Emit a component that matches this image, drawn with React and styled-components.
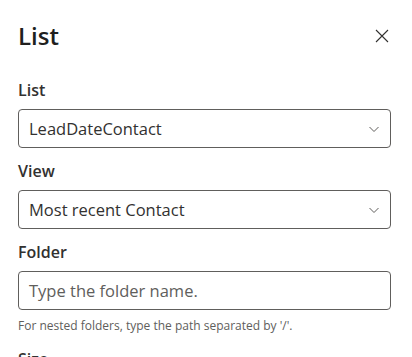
import React from 'react';
import styled, { createGlobalStyle } from 'styled-components';

const GlobalStyle = createGlobalStyle`
    html, body {
        margin: 0;
        padding: 0;
        background: #fff;
    }
    body {
        font-family: "Open Sans", "Noto Sans", sans-serif;
        color: #323130;
    }
`;

const Panel = styled.div`
    width: 412px;
    height: 357px;
    overflow: hidden;
    box-sizing: border-box;
    padding: 19px 21px 0 18px;
    background: #fff;
`;

const Header = styled.div`
    display: flex;
    justify-content: space-between;
    align-items: center;
    height: 34px;
    margin-bottom: 26px;

    h1 {
        margin: 0;
        font-size: 24px;
        font-weight: 600;
        line-height: 34px;
        color: #201f1e;
    }
`;

const CloseButton = styled.button`
    width: 24px;
    height: 24px;
    margin-right: -3px;
    padding: 0;
    border: none;
    background: transparent;
    display: flex;
    align-items: center;
    justify-content: center;
    color: #323130;
`;

const Field = styled.div`
    display: flex;
    flex-direction: column;
    margin-bottom: ${(p) => p.$gap ?? 12}px;
`;

const Label = styled.label`
    font-size: 16px;
    font-weight: 600;
    line-height: 22px;
    color: #323130;
    margin-bottom: 8px;
`;

const Box = styled.div`
    height: 39px;
    box-sizing: border-box;
    border: 1px solid #605e5c;
    border-radius: 4px;
    display: flex;
    align-items: center;
    justify-content: space-between;
    padding: 0 10px 0 10px;
    font-size: 16.5px;
    color: ${(p) => (p.$placeholder ? '#605e5c' : '#323130')};
`;

const Help = styled.div`
    font-size: 12px;
    line-height: 16px;
    color: #605e5c;
    margin-top: 8px;
`;

const Chevron = () => (
    <svg width="12" height="12" viewBox="0 0 12 12" fill="none">
        <path d="M1.5 4 L6 8.5 L10.5 4" stroke="#605e5c" strokeWidth="1" />
    </svg>
);

const App = () => {
    return (
        <>
            <GlobalStyle />
            <Panel>
                <Header>
                    <h1>List</h1>
                    <CloseButton aria-label="Close">
                        <svg width="14" height="14" viewBox="0 0 14 14" fill="none">
                            <path d="M1 1 L13 13 M13 1 L1 13" stroke="#323130" strokeWidth="1.1" />
                        </svg>
                    </CloseButton>
                </Header>
                <Field>
                    <Label>List</Label>
                    <Box>
                        <span>LeadDateContact</span>
                        <Chevron />
                    </Box>
                </Field>
                <Field>
                    <Label>View</Label>
                    <Box>
                        <span>Most recent Contact</span>
                        <Chevron />
                    </Box>
                </Field>
                <Field $gap={14}>
                    <Label>Folder</Label>
                    <Box $placeholder>
                        <span>Type the folder name.</span>
                    </Box>
                    <Help>For nested folders, type the path separated by '/'.</Help>
                </Field>
                <Field>
                    <Label>Size</Label>
                </Field>
            </Panel>
        </>
    );
};

export default App;
